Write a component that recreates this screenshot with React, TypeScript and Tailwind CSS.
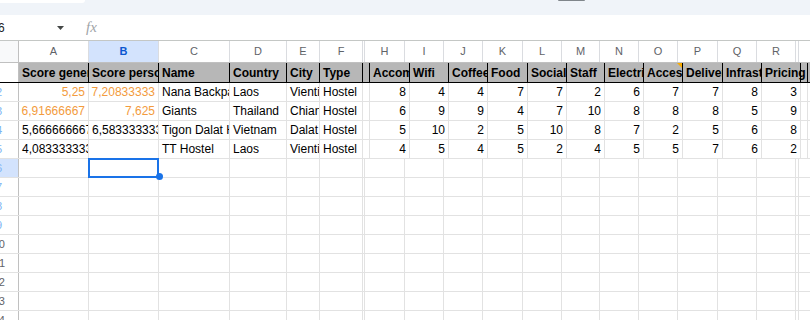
import React from "react";

type Col = { id: string; w: string; hidden?: boolean };
type Val = { v: string; r?: boolean; o?: boolean };

const COLS: Col[] = [
  { id: "A", w: "w-[70px]" },
  { id: "B", w: "w-[70px]" },
  { id: "C", w: "w-[71px]" },
  { id: "D", w: "w-[57px]" },
  { id: "E", w: "w-[33px]" },
  { id: "F", w: "w-[43px]" },
  { id: "G", w: "w-[2px]", hidden: true },
  { id: "H", w: "w-[40px]" },
  { id: "I", w: "w-[39px]" },
  { id: "J", w: "w-[39px]" },
  { id: "K", w: "w-[40px]" },
  { id: "L", w: "w-[39px]" },
  { id: "M", w: "w-[38px]" },
  { id: "N", w: "w-[39px]" },
  { id: "O", w: "w-[39px]" },
  { id: "P", w: "w-[40px]" },
  { id: "Q", w: "w-[39px]" },
  { id: "R", w: "w-[39px]" },
  { id: "S", w: "w-[3px]", hidden: true },
  { id: "T", w: "w-[40px]" },
];

const HEADERS = [
  "Score general", "Score personal", "Name", "Country", "City", "Type", "",
  "Accommodation", "Wifi", "Coffee", "Food", "Social", "Staff", "Electricity",
  "Access", "Delivery", "Infrastructure", "Pricing", "", "",
];

const scores = (nums: number[]): Val[] => nums.map((n) => ({ v: String(n), r: true }));

const ROWS: Val[][] = [
  [
    { v: "5,25", r: true, o: true },
    { v: "7,20833333", r: true, o: true },
    { v: "Nana Backpacker" }, { v: "Laos" }, { v: "Vientiane" }, { v: "Hostel" }, { v: "" },
    ...scores([8, 4, 4, 7, 7, 2, 6, 7, 7, 8, 3]),
  ],
  [
    { v: "6,91666667", r: true, o: true },
    { v: "7,625", r: true, o: true },
    { v: "Giants" }, { v: "Thailand" }, { v: "Chiang Mai" }, { v: "Hostel" }, { v: "" },
    ...scores([6, 9, 9, 4, 7, 10, 8, 8, 8, 5, 9]),
  ],
  [
    { v: "5,666666667" },
    { v: "6,583333333" },
    { v: "Tigon Dalat Hostel" }, { v: "Vietnam" }, { v: "Dalat" }, { v: "Hostel" }, { v: "" },
    ...scores([5, 10, 2, 5, 10, 8, 7, 2, 5, 6, 8]),
  ],
  [
    { v: "4,083333333" },
    { v: "" },
    { v: "TT Hostel" }, { v: "Laos" }, { v: "Vientiane" }, { v: "Hostel" }, { v: "" },
    ...scores([4, 5, 4, 5, 2, 4, 5, 5, 7, 6, 2]),
  ],
];

const EMPTY_ROWS = [6, 7, 8, 9, 10, 11, 12, 13, 14];

// only the tail of each row number shows, the sheet is cut on the left
function RowHead({ n, active }: { n: number; active?: boolean }) {
  const wide = n >= 10;
  return (
    <div
      className={`shrink-0 w-[19px] h-full flex items-center justify-end overflow-hidden border-r border-[#c0c0c0] text-[11px] ${
        active ? "bg-[#d3e3fd]" : "bg-white"
      } ${wide ? "pr-[13px] text-[#5f6368]" : "pr-[16px] text-[#7cb4f4]"}`}
    >
      <span className="whitespace-nowrap">{n > 1 ? n : ""}</span>
    </div>
  );
}

export default function App() {
  return (
    <div className="w-[810px] h-[320px] overflow-hidden bg-white font-['Liberation_Sans',Arial,sans-serif] text-black">
      {/* top of the toolbar strip */}
      <div className="h-[15px] bg-[#f0f4f9] flex items-start">
        <div className="w-[85px] h-[3px] bg-white rounded-br-[10px]" />
        <div className="ml-[473px] w-[27px] h-[1px] bg-[#80868b] rounded-b" />
      </div>

      {/* formula bar */}
      <div className="h-[26px] flex items-center border-b border-[#c4c7c5] bg-white">
        <div className="w-[56px] overflow-hidden flex">
          <span className="-ml-[10px] text-[12px] text-[#202124] whitespace-nowrap">B6</span>
        </div>
        <svg width="7" height="4" viewBox="0 0 7 4" className="ml-[1px]">
          <path d="M0 0h7L3.5 4z" fill="#444746" />
        </svg>
        <span className="ml-[22px] font-['Liberation_Serif',serif] italic text-[15px] text-[#a0a4a8] leading-none">
          fx
        </span>
      </div>

      {/* column letters */}
      <div className="h-[22px] flex border-b border-[#c0c0c0]">
        <div className="shrink-0 w-[19px] h-full bg-[#f8f9fa] border-r border-[#c0c0c0]" />
        {COLS.map((c) => (
          <div
            key={c.id}
            className={`shrink-0 ${c.w} h-full flex items-center justify-center border-r border-[#dadce0] text-[11px] ${
              c.id === "B" ? "bg-[#d3e3fd] text-[#0b57d0] font-bold" : "bg-white text-[#5f6368]"
            }`}
          >
            {c.hidden ? "" : c.id}
          </div>
        ))}
      </div>

      {/* header row */}
      <div className="h-[20px] flex border-b border-black">
        <RowHead n={1} />
        {COLS.map((c, i) => (
          <div
            key={c.id}
            className={`relative shrink-0 ${c.w} h-full flex items-center px-[3px] whitespace-nowrap bg-[#b7b7b7] border-r border-black text-[12px] font-bold ${
              c.id === "R" ? "overflow-visible z-10" : "overflow-hidden"
            }`}
          >
            {HEADERS[i]}
            {c.id === "O" && (
              <span className="absolute top-0 right-0 w-0 h-0 border-l-[5px] border-l-transparent border-t-[5px] border-t-[#f9ab00]" />
            )}
          </div>
        ))}
      </div>

      {/* data rows */}
      {ROWS.map((row, ri) => (
        <div key={ri} className="h-[19px] flex border-b border-[#e2e2e2]">
          <RowHead n={ri + 2} />
          {COLS.map((c, i) => {
            const cell = row[i] ?? { v: "" };
            return (
              <div
                key={c.id}
                className={`shrink-0 ${c.w} h-full flex items-center px-[3px] overflow-hidden whitespace-nowrap border-r border-[#e2e2e2] text-[12px] ${
                  cell.r ? "justify-end" : "justify-start"
                } ${cell.o ? "text-[#f39b3d]" : "text-black"}`}
              >
                {cell.v}
              </div>
            );
          })}
        </div>
      ))}

      {EMPTY_ROWS.map((n) => (
        <div key={n} className="h-[19px] flex border-b border-[#e2e2e2]">
          <RowHead n={n} active={n === 6} />
          {COLS.map((c) => (
            <div key={c.id} className={`relative shrink-0 ${c.w} h-full border-r border-[#e2e2e2]`}>
              {n === 6 && c.id === "B" && (
                <>
                  <div className="absolute -left-px -top-px w-[71px] h-[20px] border-2 border-[#1a73e8] z-10" />
                  <div className="absolute left-[67px] top-[14px] w-[7px] h-[7px] rounded-full bg-[#1a73e8] z-20" />
                </>
              )}
            </div>
          ))}
        </div>
      ))}
    </div>
  );
}
